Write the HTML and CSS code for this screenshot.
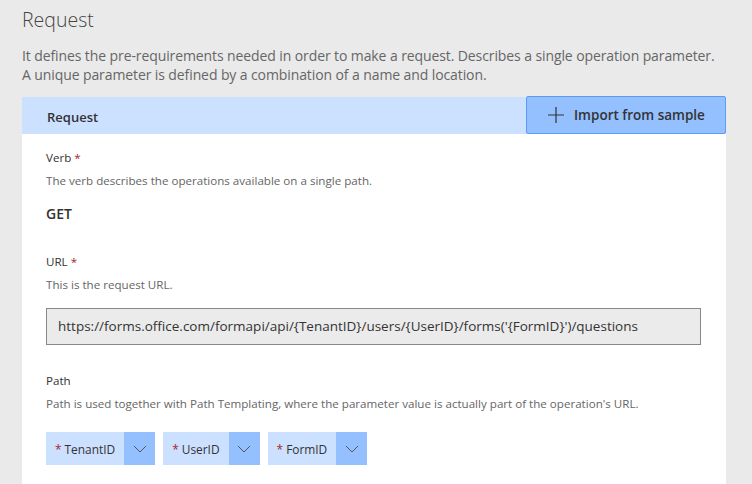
FILE: index.html
```html
<!DOCTYPE html>
<html>
<head>
<meta charset="utf-8">
<link rel="stylesheet" href="styles.css">
</head>
<body>
<div class="page">
  <h1 class="title">Request</h1>
  <p class="intro">It defines the pre-requirements needed in order to make a request. Describes a single operation parameter.<br>A unique parameter is defined by a combination of a name and location.</p>
  <section class="panel">
    <div class="panel-head">
      <span class="panel-title">Request</span>
      <button class="import-btn"><svg class="plus" width="18" height="18" viewBox="0 0 18 18"><path d="M9 1v16M1 9h16" stroke="#333" stroke-width="1.2" fill="none"/></svg><span>Import from sample</span></button>
    </div>
    <div class="panel-body">
      <div class="field field-verb">
        <div class="label">Verb <span class="req">*</span></div>
        <div class="hint">The verb describes the operations available on a single path.</div>
        <div class="verb">GET</div>
      </div>
      <div class="field field-url">
        <div class="label">URL <span class="req">*</span></div>
        <div class="hint">This is the request URL.</div>
        <div class="url-box">https://forms.office.com/formapi/api/{TenantID}/users/{UserID}/forms('{FormID}')/questions</div>
      </div>
      <div class="field">
        <div class="label">Path</div>
        <div class="hint">Path is used together with Path Templating, where the parameter value is actually part of the operation's URL.</div>
        <div class="chips">
          <div class="chip"><span class="chip-label"><span class="req">*</span> TenantID</span><span class="chip-drop"><svg width="14" height="8" viewBox="0 0 14 8"><path d="M1 1l6 6 6-6" stroke="#555" stroke-width="1" fill="none"/></svg></span></div>
          <div class="chip"><span class="chip-label"><span class="req">*</span> UserID</span><span class="chip-drop"><svg width="14" height="8" viewBox="0 0 14 8"><path d="M1 1l6 6 6-6" stroke="#555" stroke-width="1" fill="none"/></svg></span></div>
          <div class="chip"><span class="chip-label"><span class="req">*</span> FormID</span><span class="chip-drop"><svg width="14" height="8" viewBox="0 0 14 8"><path d="M1 1l6 6 6-6" stroke="#555" stroke-width="1" fill="none"/></svg></span></div>
        </div>
      </div>
    </div>
  </section>
</div>
</body>
</html>
```
FILE: styles.css
```css
html, body {
  margin: 0;
  padding: 0;
  background: #eaeaea;
  font-family: "Open Sans", "Noto Sans", sans-serif;
  color: #333;
  overflow: hidden;
}
.page {
  padding: 0 26px 0 22px;
}
.title {
  margin: 0;
  padding-top: 6px;
  font-size: 19.5px;
  font-weight: 300;
  line-height: 28px;
  color: #444;
}
.intro {
  margin: 12px 0 0;
  font-size: 14px;
  line-height: 19px;
  color: #666;
  letter-spacing: -0.1px;
  white-space: nowrap;
}
.panel {
  margin-top: 13px;
  background: #fff;
  height: 400px;
}
.panel-head {
  display: flex;
  align-items: center;
  justify-content: space-between;
  background: #cce0ff;
  height: 37px;
  padding-left: 25px;
}
.panel-title {
  font-size: 13px;
  font-weight: 600;
  color: #333;
  margin-top: 2px;
}
.import-btn {
  display: flex;
  align-items: center;
  gap: 9px;
  height: 38px;
  width: 200px;
  margin-top: -1px;
  padding: 0 0 0 20px;
  background: #94c0ff;
  border: 1px solid #5b9cf8;
  border-radius: 2px;
  font-family: inherit;
  font-size: 13.5px;
  font-weight: 600;
  color: #333;
}
.panel-body {
  padding: 16px 25px 0 24px;
}
.field {
  margin-bottom: 24px;
}
.field-verb {
  margin-bottom: 31px;
}
.field-url {
  margin-bottom: 28px;
}
.label {
  font-size: 11.6px;
  line-height: 16px;
  color: #333;
}
.req {
  color: #a4262c;
}
.hint {
  margin-top: 7px;
  font-size: 11.6px;
  line-height: 16px;
  color: #666;
}
.verb {
  margin-top: 16px;
  font-size: 14px;
  font-weight: 600;
  line-height: 18px;
}
.url-box {
  margin-top: 15px;
  width: 655px;
  box-sizing: border-box;
  height: 37px;
  line-height: 35px;
  padding-left: 11px;
  background: #ebebeb;
  border: 1px solid #888;
  font-size: 13.5px;
  color: #333;
  white-space: nowrap;
}
.chips {
  display: flex;
  gap: 8px;
  margin-top: 20px;
}
.chip {
  display: flex;
  height: 33px;
  background: #cce0ff;
}
.chip-label {
  display: flex;
  align-items: center;
  gap: 3px;
  padding: 0 9px 0 9px;
  font-size: 11.9px;
  color: #333;
}
.chip-drop {
  display: flex;
  align-items: center;
  justify-content: center;
  width: 31px;
  background: #94c0ff;
}
```
